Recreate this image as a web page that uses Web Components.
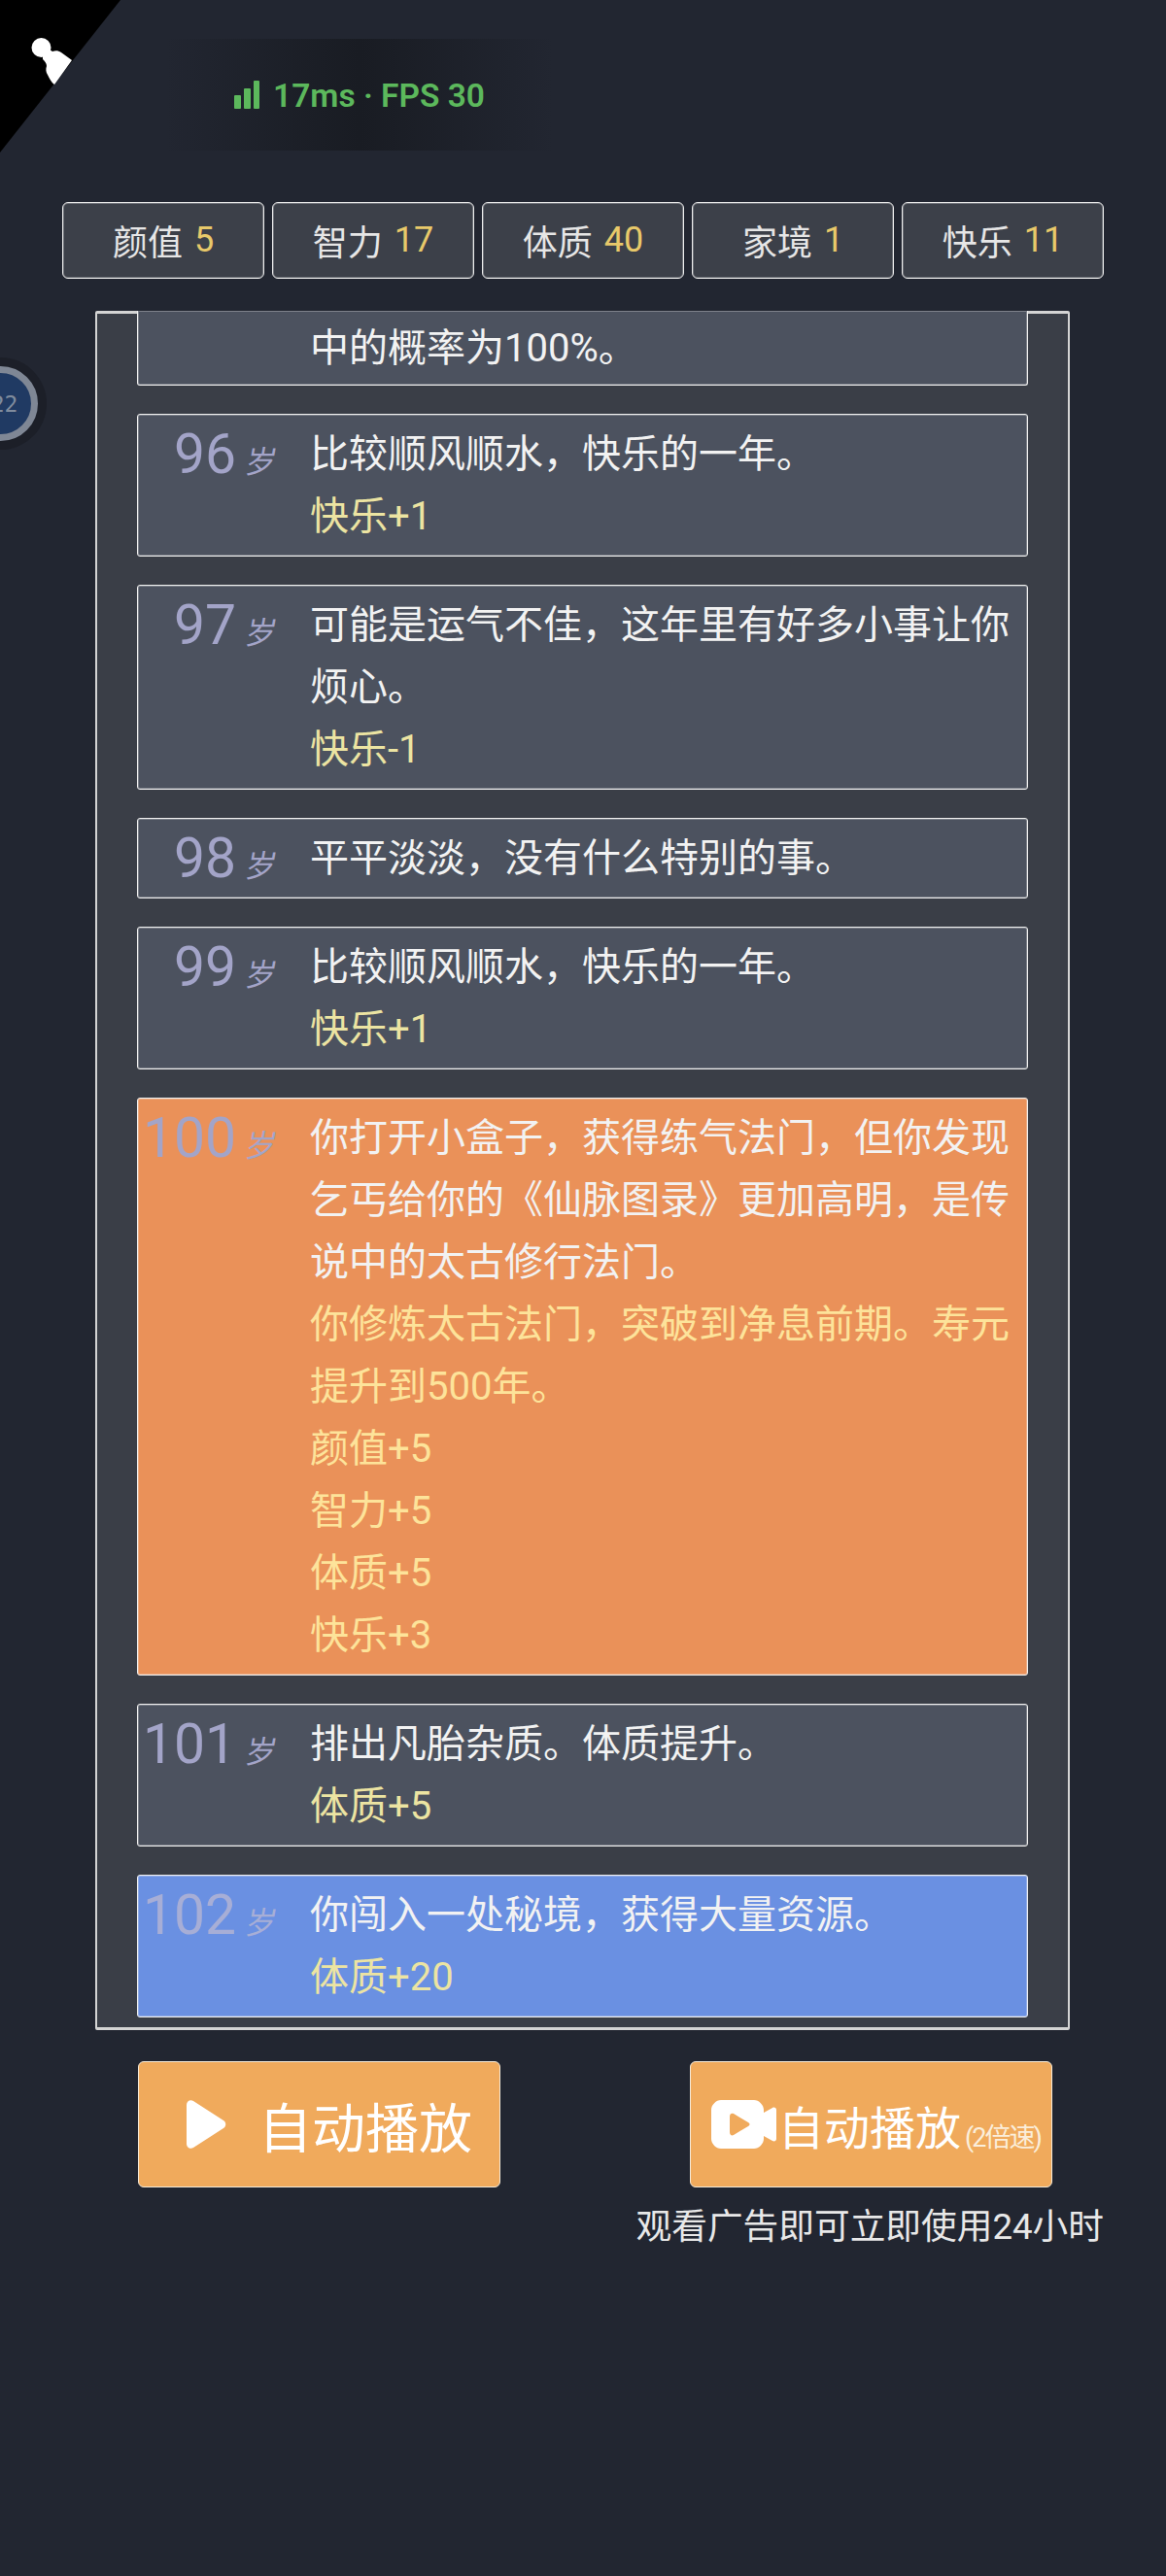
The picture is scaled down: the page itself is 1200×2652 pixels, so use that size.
<!DOCTYPE html>
<html lang="zh-CN">
<head>
<meta charset="utf-8">
<title>人生重开</title>
<style>
    html, body { margin: 0; padding: 0; }
    body {
        width: 1200px;
        height: 2652px;
        overflow: hidden;
        background: #222631;
        font-family: Roboto, "Noto Sans CJK SC", sans-serif;
        color: #f0f0f0;
    }
    .fx { color: #ece4a2; }
    life-card[kind="orange"] .fx { color: #fde39a; }
</style>
</head>
<body>
<corner-badge></corner-badge>
<float-ball>22</float-ball>
<net-status>17ms · FPS 30</net-status>
<stat-bar>
    <stat-chip label="颜值" value="5"></stat-chip>
    <stat-chip label="智力" value="17"></stat-chip>
    <stat-chip label="体质" value="40"></stat-chip>
    <stat-chip label="家境" value="1"></stat-chip>
    <stat-chip label="快乐" value="11"></stat-chip>
</stat-bar>
<life-panel>
    <life-card clipped><div>中的概率为100%。</div></life-card>
    <life-card age="96"><div>比较顺风顺水，快乐的一年。</div><div class="fx">快乐+1</div></life-card>
    <life-card age="97"><div>可能是运气不佳，这年里有好多小事让你烦心。</div><div class="fx">快乐-1</div></life-card>
    <life-card age="98"><div>平平淡淡，没有什么特别的事。</div></life-card>
    <life-card age="99"><div>比较顺风顺水，快乐的一年。</div><div class="fx">快乐+1</div></life-card>
    <life-card age="100" kind="orange">
        <div>你打开小盒子，获得练气法门，但你发现乞丐给你的《仙脉图录》更加高明，是传说中的太古修行法门。</div>
        <div class="fx">你修炼太古法门，突破到净息前期。寿元提升到500年。</div>
        <div class="fx">颜值+5</div>
        <div class="fx">智力+5</div>
        <div class="fx">体质+5</div>
        <div class="fx">快乐+3</div>
    </life-card>
    <life-card age="101"><div>排出凡胎杂质。体质提升。</div><div class="fx">体质+5</div></life-card>
    <life-card age="102" kind="blue"><div>你闯入一处秘境，获得大量资源。</div><div class="fx">体质+20</div></life-card>
</life-panel>
<action-row>
    <play-button icon="play">自动播放</play-button>
    <play-button icon="video" note="(2倍速)">自动播放</play-button>
</action-row>
<ad-note>观看广告即可立即使用24小时</ad-note>

<script>
class CornerBadge extends HTMLElement {
    constructor() {
        super();
        this.attachShadow({mode: 'open'}).innerHTML = `
            <style>
                :host { display: block; position: absolute; left: 0; top: 0; width: 125px; height: 157px; }
                svg { display: block; }
            </style>
            <svg width="125" height="157" viewBox="0 0 125 157">
                <polygon points="0,0 124,0 0,157" fill="#000"/>
                <circle cx="42.500" cy="49" r="10" fill="#fff"/>
                <path fill="#fff" d="M44 52l7-1 3 2c3-1 6-1 9 1l11 8-18 25c-3-2-5-6-7-10-2-3-2-6-1-9 0-3-2-5-4-7z"/>
            </svg>`;
    }
}

class FloatBall extends HTMLElement {
    constructor() {
        super();
        this.attachShadow({mode: 'open'}).innerHTML = `
            <style>
                :host {
                    display: flex;
                    position: absolute;
                    left: -38px;
                    top: 377px;
                    width: 77px;
                    height: 77px;
                    box-sizing: border-box;
                    border-radius: 50%;
                    border: 7px solid #7f8795;
                    background: #203a63;
                    box-shadow: 0 0 0 9px #1c1f28;
                    align-items: center;
                    justify-content: center;
                    color: #7f8b9d;
                    font: 23px "DejaVu Sans Mono", monospace;
                }
                span { position: relative; left: 4px; }
            </style>
            <span><slot></slot></span>`;
    }
}

class NetStatus extends HTMLElement {
    constructor() {
        super();
        this.attachShadow({mode: 'open'}).innerHTML = `
            <style>
                :host {
                    display: flex;
                    align-items: center;
                    box-sizing: border-box;
                    width: 400px;
                    height: 115px;
                    margin: 40px 0 0 170px;
                    padding: 2px 0 0 71px;
                    gap: 14px;
                    color: #5cb85c;
                    font: 600 33.500px Roboto, sans-serif;
                    background: linear-gradient(90deg, rgba(24,26,33,0), #191c23 50%, rgba(24,26,33,0));
                }
                svg { display: block; margin-top: -3px; }
            </style>
            <svg width="26" height="29" viewBox="0 0 26 29" fill="#5cb85c">
                <rect x="0" y="15" width="7" height="14" rx="1"/>
                <rect x="10" y="8" width="7" height="21" rx="1"/>
                <rect x="20" y="0" width="6" height="29" rx="1"/>
            </svg>
            <span><slot></slot></span>`;
    }
}

class StatBar extends HTMLElement {
    constructor() {
        super();
        this.attachShadow({mode: 'open'}).innerHTML = `
            <style>
                :host { display: flex; gap: 8px; margin: 53px 64px 0; }
            </style>
            <slot></slot>`;
    }
}

class StatChip extends HTMLElement {
    constructor() {
        super();
        this.attachShadow({mode: 'open'}).innerHTML = `
            <style>
                :host {
                    display: flex;
                    flex: 1 1 0;
                    height: 79px;
                    box-sizing: border-box;
                    padding-bottom: 2px;
                    align-items: center;
                    justify-content: center;
                    gap: 12px;
                    background: #3c4049;
                    border: 1px solid #ececec;
                    box-shadow: inset 0 0 0 1px rgba(236, 236, 236, .3);
                    border-radius: 6px;
                    color: #e6e6e6;
                    font: 36px Roboto, "Noto Sans CJK SC", sans-serif;
                }
                b { font-weight: 400; color: #e8c96a; }
            </style>
            <span id="label"></span><b id="value"></b>`;
    }

    connectedCallback(){
        this.shadowRoot.querySelector('#label').textContent = this.getAttribute('label');
        this.shadowRoot.querySelector('#value').textContent = this.getAttribute('value');
    }
}

class LifePanel extends HTMLElement {
    constructor() {
        super();
        this.attachShadow({mode: 'open'}).innerHTML = `
            <style>
                :host {
                    display: flex;
                    flex-direction: column;
                    gap: 29px;
                    box-sizing: border-box;
                    width: 1003px;
                    height: 1770px;
                    margin: 33px 0 0 98px;
                    padding: 0 41px;
                    background: #3a3e47;
                    border: 2px solid #d4d4d4;
                    border-top-width: 3px;
                    border-bottom-width: 3px;
                    border-radius: 2px;
                }
            </style>
            <slot></slot>`;
    }
}

class LifeCard extends HTMLElement {
    constructor() {
        super();
        this.attachShadow({mode: 'open'}).innerHTML = `
            <style>
                :host {
                    display: flex;
                    box-sizing: border-box;
                    padding: 9px 8px 8px 0;
                    background: #4c525f;
                    border: 1px solid #f0f0f0;
                    box-shadow: inset 0 0 0 1px rgba(240, 240, 240, .3);
                    border-radius: 3px;
                    font: 40px/64px Roboto, "Noto Sans CJK SC", sans-serif;
                    color: #f2f2f2;
                }
                :host([kind="orange"]) { background: #ea9159; }
                :host([kind="blue"]) { background: #6a90e2; }
                :host([clipped]) {
                    margin-top: -3px;
                    height: 77px;
                    padding-top: 7px;
                    border-top: 0;
                    border-radius: 0 0 3px 3px;
                }
                #age {
                    flex: none;
                    display: flex;
                    justify-content: flex-end;
                    align-items: baseline;
                    box-sizing: border-box;
                    width: 177px;
                    height: 64px;
                    padding-right: 34px;
                    gap: 10px;
                    color: #a3a4c8;
                    font-size: 57px;
                }
                #age i {
                    display: block;
                    font-size: 32px;
                    font-style: normal;
                    line-height: 1;
                    transform: skewX(-10deg);
                }
                :host([kind="blue"]) #age { color: #a7aed6; }
                #text { flex: 1; min-width: 0; }
            </style>
            <div id="age"></div>
            <div id="text"><slot></slot></div>`;
    }

    connectedCallback(){
        let age = this.getAttribute('age');
        if(age !== null){
            this.shadowRoot.querySelector('#age').innerHTML = `<span>${age}</span><i>岁</i>`;
        }
    }
}

class ActionRow extends HTMLElement {
    constructor() {
        super();
        this.attachShadow({mode: 'open'}).innerHTML = `
            <style>
                :host { display: flex; justify-content: space-between; margin: 32px 117px 0 142px; }
            </style>
            <slot></slot>`;
    }
}

class PlayButton extends HTMLElement {
    constructor() {
        super();
        this.attachShadow({mode: 'open'}).innerHTML = `
            <style>
                :host {
                    display: flex;
                    align-items: center;
                    box-sizing: border-box;
                    width: 373px;
                    height: 130px;
                    background: #f0aa5c;
                    border: 1px solid #f6ead8;
                    border-radius: 6px;
                    color: #fff;
                    white-space: nowrap;
                    font: 55px Roboto, "Noto Sans CJK SC", sans-serif;
                }
                :host([icon="play"]) { padding-left: 49px; gap: 33px; }
                :host([icon="video"]) { padding-left: 21px; gap: 2px; font-size: 47px; }
                svg { display: block; flex: none; }
                small {
                    align-self: flex-end;
                    margin: 0 0 35px 2px;
                    font-size: 27px;
                    line-height: 30px;
                    letter-spacing: -2px;
                    white-space: nowrap;
                    color: #fbeeda;
                }
                small:empty { display: none; }
            </style>
            <span id="icon"></span><span><slot></slot></span><small id="note"></small>`;
    }

    connectedCallback(){
        let icon = this.shadowRoot.querySelector('#icon');
        if(this.getAttribute('icon') === 'play'){
            icon.innerHTML = `<svg width="41" height="50" viewBox="0 0 41 50"><path fill="#fff" d="M0 5c0-4 4-6 7-4l31 20c3 2 3 6 0 8L7 49c-3 2-7 0-7-4z"/></svg>`;
        }else{
            icon.innerHTML = `<svg width="67" height="50" viewBox="0 0 67 50"><path fill="#fff" d="M10 0h34c5 0 10 5 10 10v3l9-5c2-1 4 0 4 2v30c0 2-2 3-4 2l-9-5v3c0 5-5 10-10 10H10C5 50 0 45 0 40V10C0 5 5 0 10 0z"/><path fill="#f0aa5c" d="M19 17c0-3 2-4 4-3l15 9c2 1 2 3 0 4l-15 9c-2 1-4 0-4-3z"/></svg>`;
        }
        this.shadowRoot.querySelector('#note').textContent = this.getAttribute('note') || '';
    }
}

class AdNote extends HTMLElement {
    constructor() {
        super();
        this.attachShadow({mode: 'open'}).innerHTML = `
            <style>
                :host {
                    display: block;
                    margin: 18px 64px 0 0;
                    text-align: right;
                    color: #e8e8e8;
                    font: 36.700px/46px Roboto, "Noto Sans CJK SC", sans-serif;
                }
            </style>
            <slot></slot>`;
    }
}

customElements.define('corner-badge', CornerBadge);
customElements.define('float-ball', FloatBall);
customElements.define('net-status', NetStatus);
customElements.define('stat-bar', StatBar);
customElements.define('stat-chip', StatChip);
customElements.define('life-panel', LifePanel);
customElements.define('life-card', LifeCard);
customElements.define('action-row', ActionRow);
customElements.define('play-button', PlayButton);
customElements.define('ad-note', AdNote);
</script>
</body>
</html>
